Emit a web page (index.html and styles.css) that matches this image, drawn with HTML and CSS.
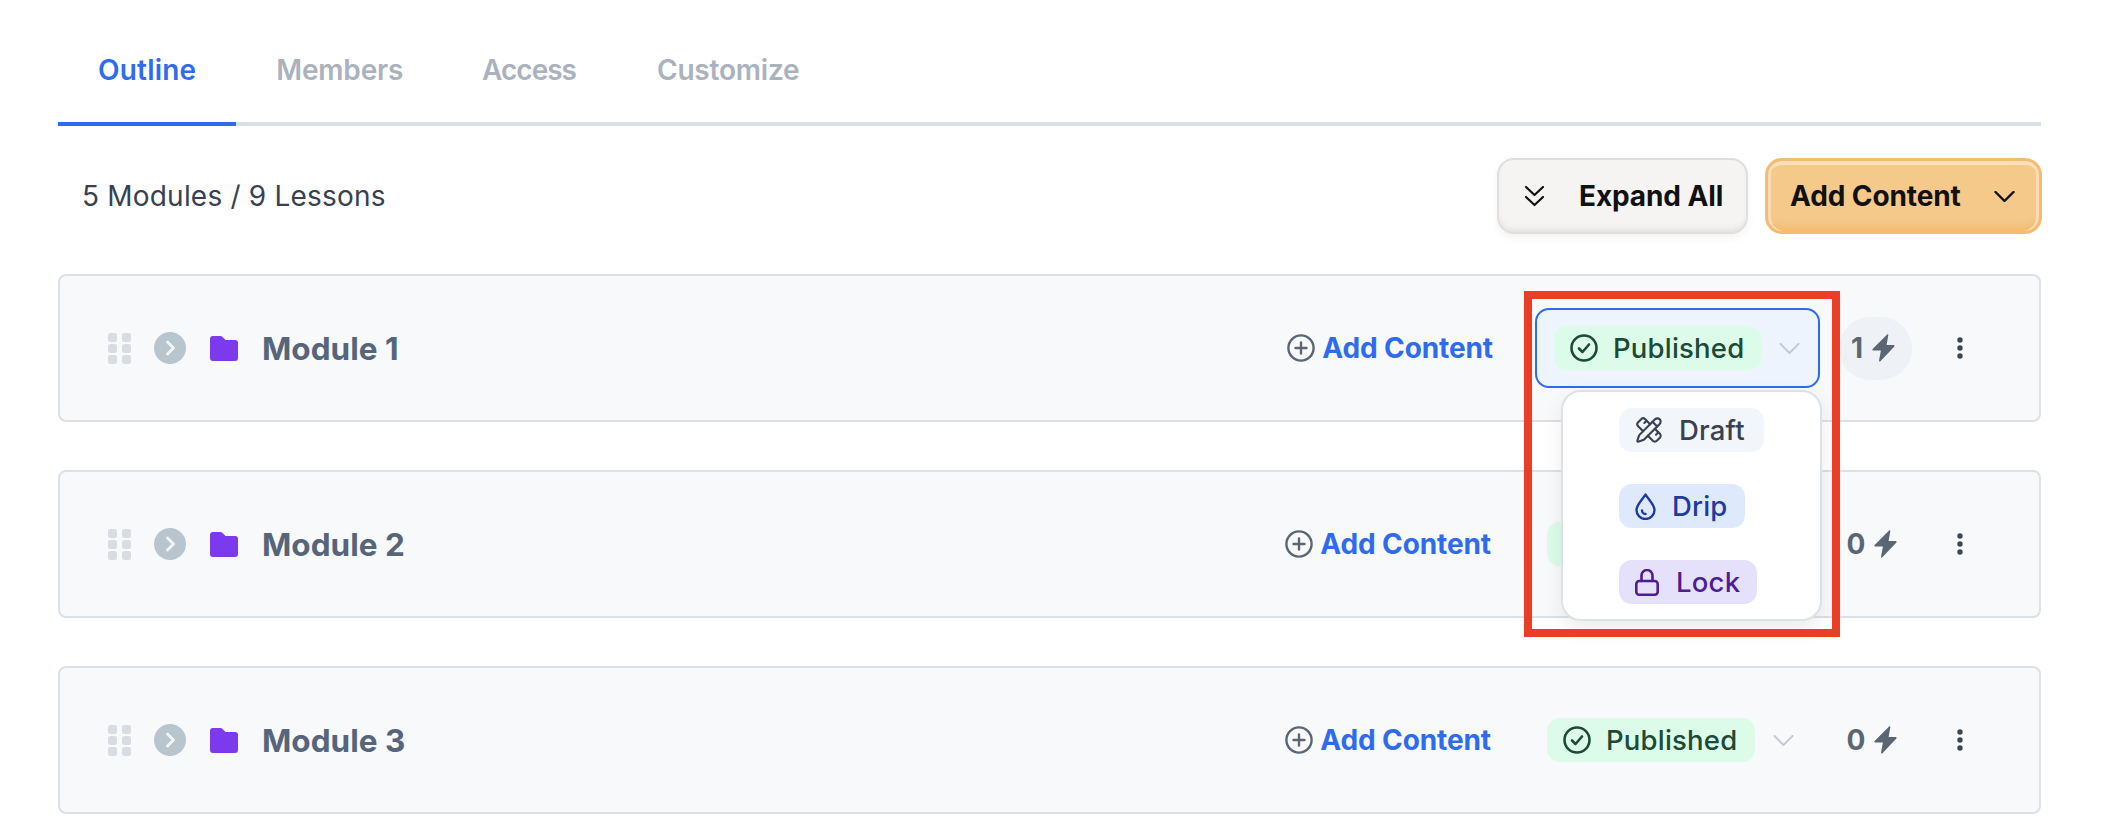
FILE: index.html
```html
<!DOCTYPE html>
<html lang="en">
<head>
<meta charset="utf-8">
<title>Course outline</title>
<link rel="stylesheet" href="styles.css">
</head>
<body>
<svg class="defs" width="0" height="0" aria-hidden="true">
  <symbol id="grip" viewBox="0 0 23 31"><g fill="#d9dce1"><rect width="9" height="9" rx="2.5"/><rect x="14" width="9" height="9" rx="2.5"/><rect y="11" width="9" height="9" rx="2.5"/><rect x="14" y="11" width="9" height="9" rx="2.5"/><rect y="22" width="9" height="9" rx="2.5"/><rect x="14" y="22" width="9" height="9" rx="2.5"/></g></symbol>
  <symbol id="expand" viewBox="0 0 32 32"><circle cx="16" cy="16" r="16" fill="#b8c5ce"/><path d="M13.5 10l6 6-6 6" fill="none" stroke="#f1f4f6" stroke-width="3" stroke-linecap="round" stroke-linejoin="round"/></symbol>
  <symbol id="folder" viewBox="0 0 28 25"><path d="M3 0h7.4c.8 0 1.500.3 2.100.9L15.600 4H25a3 3 0 0 1 3 3v15a3 3 0 0 1-3 3H3a3 3 0 0 1-3-3V3a3 3 0 0 1 3-3z" fill="#7c3aed"/></symbol>
  <symbol id="plus" viewBox="0 0 28 28"><g fill="none" stroke="#5b6675" stroke-width="2.400" stroke-linecap="round"><circle cx="14" cy="14" r="12.600"/><path d="M14 8.500v11M8.500 14h11"/></g></symbol>
  <symbol id="check" viewBox="0 0 28 28"><g fill="none" stroke="#1c4a36" stroke-width="2.600" stroke-linecap="round" stroke-linejoin="round"><circle cx="14" cy="14" r="12.500"/><path d="M9 14.500l3.500 3.500L19 10.500"/></g></symbol>
  <symbol id="chev" viewBox="0 0 21 11"><path d="M1.500 1l9 9 9-9" fill="none" stroke="#c0ccd4" stroke-width="2" stroke-linecap="round" stroke-linejoin="round"/></symbol>
  <symbol id="bolt" viewBox="0 0 22 27"><path d="M14.500.5c.6-.5 1.300 0 1.100.8L14 10.500h6.800c.8 0 1.200.9.700 1.500L8 26.300c-.6.600-1.500.1-1.300-.7L8.500 16H1.200c-.8 0-1.200-.9-.7-1.500z" fill="#5b6675"/></symbol>
  <symbol id="dots" viewBox="0 0 6 22"><g fill="#3d4654"><circle cx="3" cy="3" r="2.700"/><circle cx="3" cy="11" r="2.700"/><circle cx="3" cy="19" r="2.700"/></g></symbol>
</svg>

<main class="page">
  <nav class="tabs">
    <a class="tab tab-active">Outline</a>
    <a class="tab">Members</a>
    <a class="tab tab-tight">Access</a>
    <a class="tab">Customize</a>
  </nav>

  <div class="toolbar">
    <span class="summary">5 Modules / 9 Lessons</span>
    <div class="actions">
      <button class="btn btn-light">
        <svg class="btn-icon-double" viewBox="0 0 21 22"><path d="M2 2l8.500 8L19 2M2 12l8.500 8L19 12" fill="none" stroke="#111" stroke-width="2.200" stroke-linecap="round" stroke-linejoin="round"/></svg>
        <span>Expand All</span>
      </button>
      <button class="btn btn-orange">
        <span>Add Content</span>
        <svg class="btn-icon-chev" viewBox="0 0 21 11"><path d="M1.500 1l9 9 9-9" fill="none" stroke="#111" stroke-width="2.400" stroke-linecap="round" stroke-linejoin="round"/></svg>
      </button>
    </div>
  </div>

  <section class="module">
    <svg class="i-grip"><use href="#grip"/></svg>
    <svg class="i-expand"><use href="#expand"/></svg>
    <svg class="i-folder"><use href="#folder"/></svg>
    <h3 class="module-title">Module 1</h3>
    <a class="add-link"><svg class="i-plus"><use href="#plus"/></svg>Add Content</a>
    <div class="status status-open">
      <span class="pill pill-published"><svg class="i-check"><use href="#check"/></svg>Published</span>
      <svg class="i-chev"><use href="#chev"/></svg>
      <div class="menu">
        <span class="pill pill-menu pill-draft">
          <svg class="i-draft" viewBox="0 0 24 24" fill="none" stroke="#374151" stroke-width="1.800" stroke-linecap="round" stroke-linejoin="round"><path d="M13 7 8.700 2.700a2.410 2.410 0 0 0-3.400 0L2.700 5.300a2.410 2.410 0 0 0 0 3.400L7 13"/><path d="m8 6 2-2"/><path d="m18 16 2-2"/><path d="m17 11 4.300 4.300c.94.94.94 2.460 0 3.400l-2.600 2.600c-.94.94-2.460.94-3.400 0L11 17"/><path d="M21.174 6.812a1 1 0 0 0-3.986-3.987L3.842 16.174a2 2 0 0 0-.5.83l-1.321 4.352a.5.5 0 0 0 .623.622l4.353-1.320a2 2 0 0 0 .83-.497z"/><path d="m15 5 4 4"/></svg>
          Draft</span>
        <span class="pill pill-menu pill-drip">
          <svg class="i-drip" viewBox="0 0 21 27" fill="none" stroke="#1e3a9f" stroke-width="2.400" stroke-linecap="round" stroke-linejoin="round"><path d="M10.500 1.500C8 6 1.500 11.500 1.500 17a9 9 0 0 0 18 0c0-5.500-6.500-11-9-15.500z"/><path d="M7 17.500a3.500 3.500 0 0 0 3.500 3.500"/></svg>
          Drip</span>
        <span class="pill pill-menu pill-lock">
          <svg class="i-lock" viewBox="0 0 24 27" fill="none" stroke="#4c1d95" stroke-width="2.600" stroke-linecap="round" stroke-linejoin="round"><rect x="1.300" y="12" width="21.400" height="13.700" rx="3"/><path d="M6.500 12V6.500a5.500 5.500 0 0 1 11 0V12"/></svg>
          Lock</span>
      </div>
    </div>
    <span class="count count-open">1<svg class="i-bolt"><use href="#bolt"/></svg></span>
    <svg class="i-dots"><use href="#dots"/></svg>
  </section>

  <section class="module">
    <svg class="i-grip"><use href="#grip"/></svg>
    <svg class="i-expand"><use href="#expand"/></svg>
    <svg class="i-folder"><use href="#folder"/></svg>
    <h3 class="module-title">Module 2</h3>
    <a class="add-link"><svg class="i-plus"><use href="#plus"/></svg>Add Content</a>
    <div class="status">
      <span class="pill pill-published"><svg class="i-check"><use href="#check"/></svg>Published</span>
      <svg class="i-chev"><use href="#chev"/></svg>
    </div>
    <span class="count">0<svg class="i-bolt"><use href="#bolt"/></svg></span>
    <svg class="i-dots"><use href="#dots"/></svg>
  </section>

  <section class="module">
    <svg class="i-grip"><use href="#grip"/></svg>
    <svg class="i-expand"><use href="#expand"/></svg>
    <svg class="i-folder"><use href="#folder"/></svg>
    <h3 class="module-title">Module 3</h3>
    <a class="add-link"><svg class="i-plus"><use href="#plus"/></svg>Add Content</a>
    <div class="status">
      <span class="pill pill-published"><svg class="i-check"><use href="#check"/></svg>Published</span>
      <svg class="i-chev"><use href="#chev"/></svg>
    </div>
    <span class="count">0<svg class="i-bolt"><use href="#bolt"/></svg></span>
    <svg class="i-dots"><use href="#dots"/></svg>
  </section>
</main>

<div class="annotation"></div>
</body>
</html>
```

FILE: styles.css
```css
* { box-sizing: border-box; }
html, body { margin: 0; padding: 0; background: #fff; }
body { font-family: "Inter", "Liberation Sans", sans-serif; color: #374151; overflow: hidden; }
.defs { position: absolute; }
svg { display: block; flex: none; }

.page { padding: 32px 67px 0 58px; height: 836px; }

.tabs { display: flex; height: 94px; border-bottom: 4px solid #d9dfe3; }
.tab { padding: 0 40px; height: 94px; line-height: 76px; font-size: 28px; font-weight: 600; color: #aab2be; border-bottom: 4px solid transparent; letter-spacing: -0.2px; }
.tab-active { color: #2f6bed; border-bottom-color: #2f6bed; letter-spacing: 0.2px; }
.tab-tight { letter-spacing: -1px; padding-left: 39px; padding-right: 41px; }

.toolbar { display: flex; align-items: center; justify-content: space-between; padding: 32px 0 40px 24px; }
.summary { font-size: 28px; color: #374151; letter-spacing: 0.2px; }
.actions { display: flex; gap: 17px; margin-right: -1px; }
.btn { height: 76px; display: flex; align-items: center; border-radius: 17px; font: 650 28px "Inter", sans-serif; color: #111; letter-spacing: -0.1px; padding: 0; }
.btn-light { width: 251px; background: #f5f4f3; border: 2px solid #e1dedb; box-shadow: inset 0 -5px 5px -2px #e6e3e0, 0 4px 8px rgba(0,0,0,.05); padding-left: 25px; gap: 34px; }
.btn-orange { width: 277px; background: #f5c98a; border: 3px solid #f4bc72; box-shadow: inset 0 4px 0 #fbdfb8, inset 3px 0 0 #fadcb0, inset -3px 0 0 #fadcb0, inset 0 -10px 8px -6px #f3b96b; padding-left: 22px; gap: 33px; }
.btn-icon-double { width: 21px; height: 22px; }
.btn-icon-chev { width: 21px; height: 11px; }

.module { display: flex; align-items: center; height: 148px; margin-bottom: 48px; background: #f7f9fb; border: 2px solid #dbe1e5; border-radius: 8px; padding: 0 76px 0 48px; }
.i-grip { width: 23px; height: 31px; margin-right: 23px; }
.i-expand { width: 32px; height: 32px; margin-right: 24px; }
.i-folder { width: 28px; height: 25px; margin-right: 24px; }
.module-title { margin: 0; font-size: 31.5px; font-weight: 700; color: #56657a; }

.add-link { margin-left: auto; margin-right: 42px; display: flex; align-items: center; gap: 7px; font-size: 28px; font-weight: 650; color: #2f6bed; letter-spacing: -0.1px; }
.i-plus { width: 28px; height: 28px; }

.status { position: relative; display: flex; align-items: center; width: 287px; height: 80px; padding-left: 14px; gap: 18px; }
.status-open { width: 285px; padding-left: 17px; gap: 17px; background: #edf4fe; border: 2px solid #2f6bed; border-radius: 14px; }
.pill { display: inline-flex; align-items: center; height: 44px; border-radius: 13px; font-size: 27.5px; font-weight: 500; letter-spacing: 0.2px; white-space: nowrap; }
.pill-published { width: 208px; background: #dcfce9; color: #1c4a36; padding-left: 16px; gap: 15px; }
.i-check { width: 28px; height: 28px; }
.i-chev { width: 21px; height: 11px; }

.menu { position: absolute; top: calc(100% + 4px); left: 24px; width: 261px; display: flex; flex-direction: column; align-items: flex-start; gap: 32px; padding: 16px 0 15px 56px; background: #fff; border: 2px solid #dde2e6; border-radius: 20px; box-shadow: 0 8px 20px rgba(0,0,0,.08); z-index: 2; }
.pill-menu { padding-left: 16px; }
.pill-draft { width: 145px; background: #f2f5fa; color: #374151; gap: 16px; }
.pill-drip { width: 126px; background: #deeafc; color: #1e3a9f; gap: 16px; }
.pill-lock { width: 138px; background: #e6e1fa; color: #4c1d95; gap: 17px; }
.i-draft { width: 28px; height: 28px; }
.i-drip { width: 21px; height: 27px; }
.i-lock { width: 24px; height: 27px; }

.count { display: flex; align-items: center; justify-content: center; gap: 9px; width: 73px; height: 63px; margin-left: 19px; padding-right: 7px; font-size: 28px; font-weight: 700; color: #5b6675; border-radius: 32px; }
.count-open { background: #eef1f5; padding-right: 5px; }
.i-bolt { width: 23px; height: 28px; }
.i-dots { width: 6px; height: 22px; margin-left: 45px; }

.annotation { position: absolute; left: 1524px; top: 291px; width: 316px; height: 346px; border: 8px solid #ea3f26; z-index: 3; }
```
